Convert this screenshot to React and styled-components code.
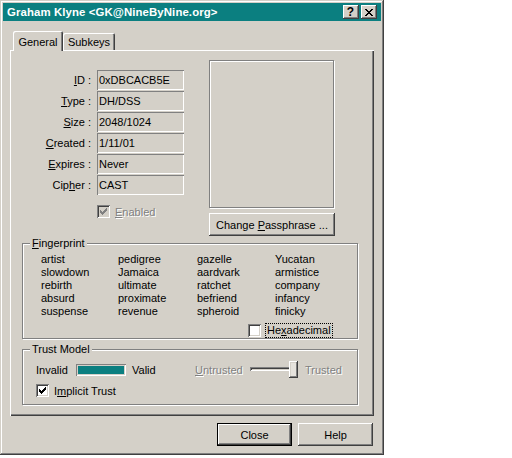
import React from 'react';
import styled, { createGlobalStyle, css } from 'styled-components';

const FACE = '#d4d0c8';

const GlobalStyle = createGlobalStyle`
  html, body { margin: 0; padding: 0; background: #fff; }
  body {
    font-family: "Liberation Sans", Arial, sans-serif;
    font-size: 11px;
    color: #000;
  }
  * { box-sizing: border-box; }
`;

// classic win32 bevels
const raised = css`
  box-shadow: inset -1px -1px #404040, inset 1px 1px #fff,
    inset -2px -2px #808080, inset 2px 2px ${FACE};
`;
const sunkenThin = css`
  box-shadow: inset 1px 1px #808080, inset -1px -1px #fff;
`;
const etched = css`
  border: 1px solid #808080;
  box-shadow: inset 1px 1px #fff, 1px 1px #fff;
`;
const disabledText = css`
  color: #808080;
  text-shadow: 1px 1px #fff;
`;

const Window = styled.div`
  width: 384px;
  height: 455px;
  padding: 3px;
  background: ${FACE};
  box-shadow: inset -1px -1px #404040, inset 1px 1px ${FACE},
    inset -2px -2px #808080, inset 2px 2px #fff;
  display: flex;
  flex-direction: column;
`;

const TitleBar = styled.div`
  height: 18px;
  background: #0b7f80;
  display: flex;
  align-items: center;
  justify-content: space-between;
  padding: 0 4px 0 4px;
`;

const TitleText = styled.span`
  color: #fff;
  font-weight: bold;
  font-size: 11.4px;
  letter-spacing: 0.1px;
`;

const TitleButtons = styled.div`
  display: flex;
  gap: 2px;
`;

const TitleButton = styled.div`
  width: 16px;
  height: 14px;
  background: ${FACE};
  ${raised};
  display: flex;
  align-items: center;
  justify-content: center;
  font-weight: bold;
  font-size: 12px;
  line-height: 14px;
  padding-right: 1px;
`;

const Body = styled.div`
  flex: 1;
  display: flex;
  flex-direction: column;
  padding: 0 7px;
`;

const TabStrip = styled.div`
  margin-top: 10px;
  height: 19px;
  display: flex;
  align-items: flex-end;
  padding-left: 3px;
`;

const Tab = styled.div`
  position: relative;
  width: ${p => p.$w}px;
  height: ${p => (p.$active ? 20 : 17)}px;
  background: ${FACE};
  border-radius: 2px 2px 0 0;
  box-shadow: inset 1px 1px #fff, inset -1px 0 #404040, inset -2px 0 #808080;
  display: flex;
  align-items: center;
  justify-content: center;
  padding-top: 1px;
  margin-bottom: ${p => (p.$active ? -1 : 0)}px;
  z-index: ${p => (p.$active ? 2 : 0)};
`;

const Panel = styled.div`
  height: 366px;
  background: ${FACE};
  box-shadow: inset 1px 1px #fff, inset -1px -1px #404040, inset -2px -2px #808080;
  display: flex;
  flex-direction: column;
`;

const TopSection = styled.div`
  display: flex;
  align-items: flex-start;
  padding-top: 10px;
`;

const LeftCol = styled.div`
  width: 174px;
  padding-top: 10px;
`;

const FieldGrid = styled.div`
  display: grid;
  grid-template-columns: 81px 87px;
  column-gap: 6px;
  row-gap: 1px;
  grid-auto-rows: 20px;
`;

const FieldLabel = styled.div`
  text-align: right;
  line-height: 20px;
`;

const FieldValue = styled.div`
  ${sunkenThin};
  line-height: 20px;
  padding-left: 2px;
`;

const CheckRow = styled.label`
  display: flex;
  align-items: center;
  gap: 5px;
  height: 13px;
  margin-left: ${p => p.$indent || 0}px;
  margin-top: ${p => p.$top || 0}px;
  ${p => p.$disabled && disabledText};
`;

const Box = styled.span`
  width: 13px;
  height: 13px;
  flex: none;
  display: flex;
  align-items: center;
  justify-content: center;
  background: ${p => (p.$disabled ? FACE : '#fff')};
  box-shadow: inset 1px 1px #808080, inset -1px -1px #fff,
    inset 2px 2px #404040, inset -2px -2px ${FACE};
  text-shadow: none;
`;

const FocusText = styled.span`
  outline: 1px dotted #000;
  outline-offset: 0;
  padding: 0 1px;
  line-height: 13px;
`;

const RightCol = styled.div`
  margin-left: 25px;
  display: flex;
  flex-direction: column;
  gap: 5px;
`;

const Picture = styled.div`
  width: 125px;
  height: 148px;
  ${etched};
`;

const Button = styled.div`
  width: ${p => p.$w}px;
  height: 23px;
  background: ${FACE};
  display: flex;
  align-items: center;
  justify-content: center;
  ${p =>
    p.$default
      ? css`
          box-shadow: inset 0 0 0 1px #000, inset -2px -2px #404040,
            inset 2px 2px #fff, inset -3px -3px #808080;
        `
      : raised};
`;

const Group = styled.div`
  position: relative;
  margin: ${p => p.$top}px 0 0 12px;
  width: 336px;
  height: ${p => p.$h}px;
  ${etched};
`;

const Legend = styled.span`
  position: absolute;
  top: -7px;
  left: 7px;
  padding: 0 2px;
  background: ${FACE};
  line-height: 13px;
`;

const WordGrid = styled.div`
  display: grid;
  grid-template-columns: 77px 79px 78px 78px;
  grid-auto-rows: 13px;
  line-height: 13px;
  padding: 9px 0 0 18px;
`;

const TrustRow = styled.div`
  display: flex;
  align-items: center;
  height: 13px;
  margin: 13px 0 0 13px;
`;

const Slot = styled.div`
  width: ${p => p.$w}px;
  flex: none;
  ${p => p.$disabled && disabledText};
`;

const ValidityBar = styled.div`
  width: 50px;
  height: 12px;
  flex: none;
  ${sunkenThin};
  padding: 2px;
  margin-right: 6px;
  & > div {
    height: 100%;
    background: #0b7f80;
  }
`;

const Slider = styled.div`
  position: relative;
  width: 48px;
  height: 17px;
  flex: none;
  margin-right: 7px;
`;

const Track = styled.div`
  position: absolute;
  left: 0;
  right: 0;
  top: 6px;
  height: 4px;
  box-shadow: inset 1px 1px #808080, inset -1px -1px #fff, inset 2px 2px #404040;
`;

const Thumb = styled.div`
  position: absolute;
  right: 0;
  top: 0;
  width: 9px;
  height: 17px;
  background: #e6e3dd;
  ${raised};
`;

const Footer = styled.div`
  margin-top: 7px;
  display: flex;
  justify-content: flex-end;
  gap: 6px;
  padding-right: 1px;
`;

const Check = ({ color = '#000' }) => (
  <svg width="7" height="7" viewBox="0 0 7 7" shapeRendering="crispEdges">
    <path
      fill={color}
      d="M0 2h1v3h-1z M1 3h1v3h-1z M2 4h1v3h-1z M3 3h1v3h-1z M4 2h1v3h-1z M5 1h1v3h-1z M6 0h1v3h-1z"
    />
  </svg>
);

const CloseGlyph = () => (
  <svg width="8" height="7" viewBox="0 0 8 7" shapeRendering="crispEdges">
    <path
      fill="#000"
      d="M0 0h2v1h-2z M6 0h2v1h-2z M1 1h2v1h-2z M5 1h2v1h-2z M2 2h4v1h-4z M3 3h2v1h-2z M2 4h4v1h-4z M1 5h2v1h-2z M5 5h2v1h-2z M0 6h2v1h-2z M6 6h2v1h-2z"
    />
  </svg>
);

const fields = [
  [<><u>I</u>D :</>, '0xDBCACB5E'],
  [<><u>T</u>ype :</>, 'DH/DSS'],
  [<><u>S</u>ize :</>, '2048/1024'],
  [<><u>C</u>reated :</>, '1/11/01'],
  [<><u>E</u>xpires :</>, 'Never'],
  [<>Cip<u>h</u>er :</>, 'CAST'],
];

const words = [
  'artist', 'pedigree', 'gazelle', 'Yucatan',
  'slowdown', 'Jamaica', 'aardvark', 'armistice',
  'rebirth', 'ultimate', 'ratchet', 'company',
  'absurd', 'proximate', 'befriend', 'infancy',
  'suspense', 'revenue', 'spheroid', 'finicky',
];

export default function App() {
  return (
    <>
      <GlobalStyle />
      <Window>
        <TitleBar>
          <TitleText>Graham Klyne &lt;GK@NineByNine.org&gt;</TitleText>
          <TitleButtons>
            <TitleButton>?</TitleButton>
            <TitleButton><CloseGlyph /></TitleButton>
          </TitleButtons>
        </TitleBar>

        <Body>
          <TabStrip>
            <Tab $active $w={50}>General</Tab>
            <Tab $w={52}>Subkeys</Tab>
          </TabStrip>

          <Panel>
            <TopSection>
              <LeftCol>
                <FieldGrid>
                  {fields.map(([label, value], i) => (
                    <React.Fragment key={i}>
                      <FieldLabel>{label}</FieldLabel>
                      <FieldValue>{value}</FieldValue>
                    </React.Fragment>
                  ))}
                </FieldGrid>
                <CheckRow $indent={87} $top={10} $disabled>
                  <Box $disabled><Check color="#808080" /></Box>
                  <span><u>E</u>nabled</span>
                </CheckRow>
              </LeftCol>
              <RightCol>
                <Picture />
                <Button $w={126}><span>Change <u>P</u>assphrase ...</span></Button>
              </RightCol>
            </TopSection>

            <Group $top={7} $h={96}>
              <Legend><u>F</u>ingerprint</Legend>
              <WordGrid>
                {words.map(w => <span key={w}>{w}</span>)}
              </WordGrid>
              <CheckRow $indent={225} $top={6}>
                <Box />
                <FocusText>He<u>x</u>adecimal</FocusText>
              </CheckRow>
            </Group>

            <Group $top={10} $h={56}>
              <Legend>Trust Model</Legend>
              <TrustRow>
                <Slot $w={40}>Invalid</Slot>
                <ValidityBar><div /></ValidityBar>
                <Slot $w={63}>Valid</Slot>
                <Slot $w={55} $disabled><u>U</u>ntrusted</Slot>
                <Slider>
                  <Track />
                  <Thumb />
                </Slider>
                <Slot $w={50} $disabled>Trusted</Slot>
              </TrustRow>
              <CheckRow $indent={13} $top={8}>
                <Box><Check /></Box>
                <span>I<u>m</u>plicit Trust</span>
              </CheckRow>
            </Group>
          </Panel>

          <Footer>
            <Button $w={75} $default>Close</Button>
            <Button $w={75}>Help</Button>
          </Footer>
        </Body>
      </Window>
    </>
  );
}
